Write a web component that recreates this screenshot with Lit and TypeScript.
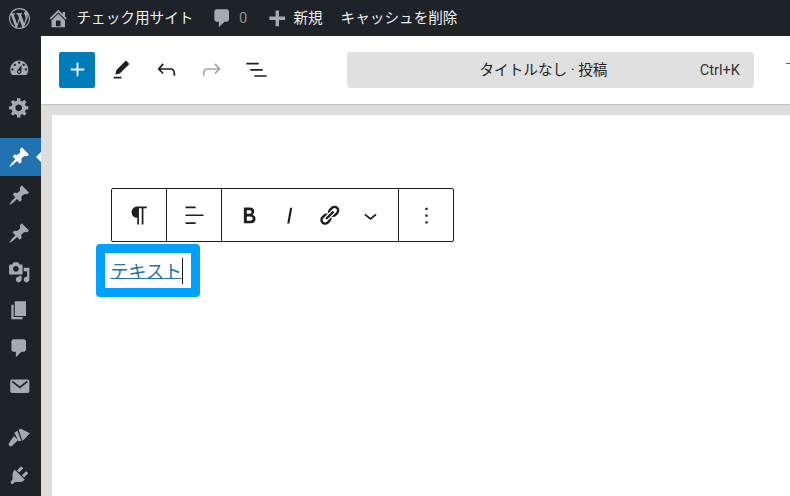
import { LitElement, html, css, svg } from "lit";
import { customElement } from "lit/decorators.js";

const D = {
  wp: "M20 10c0-5.51-4.49-10-10-10C4.48 0 0 4.49 0 10c0 5.52 4.48 10 10 10 5.51 0 10-4.48 10-10zM7.78 15.37L4.37 6.22c.55-.02 1.17-.08 1.17-.08.5-.06.44-1.13-.06-1.11 0 0-1.45.11-2.37.11-.18 0-.37 0-.58-.01C4.12 2.69 6.87 1.11 10 1.11c2.33 0 4.45.87 6.05 2.34-.68-.11-1.65.39-1.65 1.58 0 .74.45 1.36.9 2.1.35.61.55 1.36.55 2.46 0 1.49-1.4 5-1.4 5l-3.03-8.37c.54-.02.82-.17.82-.17.5-.05.44-1.25-.06-1.22 0 0-1.44.12-2.38.12-.87 0-2.33-.12-2.33-.12-.5-.03-.56 1.2-.06 1.22l.92.08 1.26 3.41zM17.41 10c.24-.64.74-1.87.43-4.25.7 1.29 1.05 2.71 1.05 4.25 0 3.29-1.73 6.24-4.4 7.78.97-2.59 1.94-5.2 2.92-7.78zM6.1 18.09C3.12 16.65 1.11 13.53 1.11 10c0-1.3.23-2.48.72-3.59C3.25 10.3 4.67 14.2 6.1 18.09zm4.03-6.63l2.58 6.98c-.86.29-1.76.45-2.71.45-.79 0-1.57-.11-2.29-.33.81-2.38 1.62-4.74 2.42-7.1z",
  home: "M16 8.5l1.53 1.53-1.06 1.06L10 4.62l-6.47 6.47-1.06-1.06L10 2.5l4 4v-2h2v4zm-6-2.46l6 5.99V18H4v-5.97zM12 17v-5H8v5h4z",
  comment: "M5 2h9c1.1 0 2 .9 2 2v7c0 1.1-.9 2-2 2h-2l-5 5v-5H5c-1.1 0-2-.9-2-2V4c0-1.1.9-2 2-2z",
  plusBar: "M17 8.5v3h-5.5V17h-3v-5.5H3v-3h5.5V3h3v5.5z",
  dashboard: "M3.76 16h12.48c1.1-1.37 1.76-3.11 1.76-5 0-4.42-3.58-8-8-8s-8 3.58-8 8c0 1.89.66 3.63 1.76 5zM10 4c.55 0 1 .45 1 1s-.45 1-1 1-1-.45-1-1 .45-1 1-1zM6 6c.55 0 1 .45 1 1s-.45 1-1 1-1-.45-1-1 .45-1 1-1zm8 0c.55 0 1 .45 1 1s-.45 1-1 1-1-.45-1-1 .45-1 1-1zm-5.37 5.55L12 7v6c0 1.1-.9 2-2 2s-2-.9-2-2c0-.57.24-1.08.63-1.45zM4 10c.55 0 1 .45 1 1s-.45 1-1 1-1-.45-1-1 .45-1 1-1zm12 0c.55 0 1 .45 1 1s-.45 1-1 1-1-.45-1-1 .45-1 1-1zm-5 3c0-.55-.45-1-1-1s-1 .45-1 1 .45 1 1 1 1-.45 1-1z",
  gear: "M18 12h-2.18c-.17.7-.44 1.35-.81 1.93l1.54 1.54-2.1 2.1-1.54-1.54c-.58.36-1.23.63-1.91.79V19H8v-2.18c-.68-.16-1.33-.43-1.91-.79l-1.54 1.54-2.12-2.12 1.54-1.54c-.36-.58-.63-1.23-.79-1.91H1V9.03h2.17c.16-.7.44-1.35.8-1.94L2.43 5.55l2.1-2.1 1.54 1.54c.58-.37 1.24-.64 1.93-.81V2h3v2.18c.68.16 1.33.43 1.91.79l1.54-1.54 2.12 2.12-1.54 1.54c.36.59.64 1.24.8 1.94H18V12zm-8.5 1.5c1.66 0 3-1.34 3-3s-1.34-3-3-3-3 1.34-3 3 1.34 3 3 3z",
  pin: "M10.44 3.02l1.82-1.82 6.36 6.35-1.83 1.82c-1.05-.68-2.48-.57-3.41.36l-.75.75c-.92.93-1.04 2.35-.35 3.41l-1.83 1.82-2.41-2.41-2.8 2.79c-.42.42-3.38 2.71-3.8 2.29s1.86-3.39 2.28-3.81l2.79-2.79L4.1 9.36l1.83-1.82c1.05.69 2.48.57 3.4-.36l.75-.75c.93-.92 1.05-2.35.36-3.41z",
  media: "M13 11V4c0-.55-.45-1-1-1h-1.67L9 1H5L3.67 3H2c-.55 0-1 .45-1 1v7c0 .55.45 1 1 1h10c.55 0 1-.45 1-1zM7 4.5c1.38 0 2.5 1.12 2.5 2.5S8.38 9.5 7 9.5 4.5 8.38 4.5 7 5.62 4.5 7 4.5zM14 6h5v10.5c0 1.38-1.12 2.5-2.5 2.5S14 17.88 14 16.5s1.12-2.5 2.5-2.5c.17 0 .34.02.5.05V9h-3V6zm-4 8.05V13h2v3.5c0 1.38-1.12 2.5-2.5 2.5S7 17.88 7 16.5 8.12 14 9.5 14c.17 0 .34.02.5.05z",
  page: "M6 15V2h10v13H6zm-1 1h8v2H3V5h2v11z",
  mail: "M19 14.5v-9c0-.83-.67-1.5-1.5-1.5H3.49c-.83 0-1.5.67-1.5 1.5v9c0 .83.67 1.5 1.5 1.5H17.5c.83 0 1.5-.67 1.5-1.5zM17.7 6.2L10.5 12 3.3 6.2l.9-1.1 6.3 5 6.3-5z",
  brush: "M9.4 3.3 11.3 2.4 19.5 6.5 13.6 12.7 12.8 13ZM5.6 6 8.4 4.2 11.8 13.1 9.4 13.6ZM5.2 8.8 9 12.4 3.5 17.8C2.7 18.4 1.6 18.1 1 17.3.5 16.6.4 15.9 1 15.2Z",
  plugin: "M13.11 4.36L9.87 7.6 8 5.73l3.24-3.24c.35-.34 1.05-.2 1.56.32.52.51.66 1.21.31 1.55zm-8 1.77l.91-1.12 9.01 9.01-1.19.84c-.71.71-2.63 1.16-3.82 1.16H6.14L4.9 17.26c-.59.59-1.54.59-2.12 0-.59-.58-.59-1.53 0-2.12l1.24-1.24v-3.88c0-1.13.4-3.19 1.09-3.89zm7.26 3.97l3.24-3.24c.34-.35 1.04-.21 1.55.31.52.51.66 1.21.31 1.55l-3.24 3.25z",
  link: "M17.74 2.76c1.68 1.69 1.68 4.41 0 6.1l-1.53 1.52c-1.12 1.12-2.7 1.47-4.14 1.09l2.62-2.61.76-.77.76-.76c.84-.84.84-2.2 0-3.04-.84-.85-2.2-.85-3.04 0l-.77.76-3.38 3.38c-.37-1.44-.02-3.02 1.1-4.14l1.52-1.53c1.69-1.68 4.42-1.68 6.1 0zM8.59 13.43l5.34-5.34c.42-.42.42-1.1 0-1.52-.44-.43-1.13-.39-1.53 0l-5.33 5.34c-.42.42-.42 1.1 0 1.52.44.43 1.13.39 1.52 0zm-.76 2.29l4.14-4.15c.38 1.44.03 3.02-1.09 4.14l-1.52 1.53c-1.69 1.68-4.41 1.68-6.1 0-1.68-1.68-1.68-4.42 0-6.1l1.53-1.52c1.12-1.12 2.7-1.47 4.14-1.1l-4.14 4.15c-.85.84-.85 2.2 0 3.05.84.84 2.2.84 3.04 0z",
};
const G = {
  plus: "M18 11.2h-5.2V6h-1.6v5.2H6v1.6h5.2V18h1.6v-5.2H18z",
  pencil: "m19 7-3-3-8.5 8.5-1 4 4-1L19 7Zm-7 11.5H5V20h7v-1.5Z",
  undo: "M18.3 11.7c-.6-.6-1.4-.9-2.3-.9H6.7l2.9-3.3-1.1-1-4.5 5L8.5 16l1-1-2.7-2.7H16c.5 0 .9.2 1.3.5 1 1 1 3.4 1 4.5v.3h1.5v-.2c0-1.5 0-4.3-1.5-5.7z",
  redo: "M15.6 6.5l-1.1 1 2.9 3.3H8c-.9 0-1.7.3-2.3.9-1.4 1.5-1.4 4.2-1.4 5.6v.2h1.5v-.3c0-1.1 0-3.5 1-4.5.3-.3.7-.5 1.3-.5h9.2L14.5 15l1.1 1.1 4.6-4.6-4.6-5z",
  list: "M3 6h11v1.5H3V6Zm3.5 5.5h11V13h-11v-1.5ZM21 17H10v1.5h11V17Z",
  para: "m9.99609 14v-.2251l.00391.0001v6.225h1.5v-14.5h2.5v14.5h1.5v-14.5h3v-1.5h-8.50391c-2.76142 0-5 2.23858-5 5 0 2.7614 2.23858 5 5 5z",
  align: "M13 5.5H4V4h9v1.5Zm7 7H4V11h16v1.5Zm-7 7H4V18h9v1.5Z",
  bold: "M14.7 11.3c1-.6 1.5-1.6 1.5-3 0-2.3-1.3-3.4-4-3.4H7v14h5.8c1.4 0 2.5-.3 3.3-1 .8-.7 1.2-1.7 1.2-2.9.1-1.9-.8-3.1-2.6-3.7zm-5.1-4h2.3c.6 0 1.1.1 1.4.4.3.3.5.7.5 1.2s-.2 1-.5 1.2c-.3.3-.8.4-1.4.4H9.6V7.3zm4.6 9c-.4.3-1 .4-1.7.4H9.6v-3.9h2.9c.7 0 1.3.2 1.7.5.4.3.6.8.6 1.5s-.2 1.2-.6 1.5z",
  italic: "M12.5 5L10 19h1.9l2.5-14z",
  chevron: "M17.5 11.6L12 16l-5.5-4.4.9-1.2L12 14l4.5-3.6 1 1.2z",
  more: "M13 19h-2v-2h2v2zm0-6h-2v-2h2v2zm0-6h-2V5h2v2z",
};

const dash = (d: string, cls = "") =>
  html`<svg class="dash ${cls}" viewBox="0 0 20 20" aria-hidden="true">${svg`<path d=${d}></path>`}</svg>`;
const gut = (d: string, cls = "") =>
  html`<svg class="gut ${cls}" viewBox="0 0 24 24" aria-hidden="true">${svg`<path d=${d}></path>`}</svg>`;

@customElement("app-root")
export class AppRoot extends LitElement {
  static styles = css`
    :host {
      display: block;
      width: 790px;
      height: 496px;
      overflow: hidden;
      font-family: "Roboto", "Noto Sans CJK JP", sans-serif;
      font-size: 14.625px;
      line-height: 36px;
    }
    * { box-sizing: border-box; }
    svg { display: block; fill: currentColor; flex: none; }
    .dash { width: 22.5px; height: 22.5px; }
    .gut { width: 27px; height: 27px; }

    .shell {
      display: grid;
      grid-template-columns: 41px 1fr;
      grid-template-rows: 36px 1fr;
      width: 790px;
      height: 496px;
    }

    .bar {
      grid-column: 1 / 3;
      display: flex;
      align-items: center;
      background: #1d2327;
      color: #f0f0f1;
    }
    .bar .dash { color: #a7aaad; }
    .bar .wp { width: 21px; height: 21px; margin-left: 9px; }
    .bar .home { margin-left: 17px; }
    .bar .site { margin-left: 7px; }
    .bar .bubble { margin-left: 18px; }
    .bar .count { margin-left: 5px; color: #8c8f94; width: 21px; }
    .bar .add { margin-left: 6px; }
    .bar .new { margin-left: 5px; }
    .bar .purge { margin-left: 18px; }

    .side {
      background: #1d2327;
      color: #a7aaad;
      padding-top: 13.5px;
      display: flex;
      flex-direction: column;
    }
    .item {
      position: relative;
      height: 38.25px;
      flex: none;
      display: flex;
      align-items: center;
      justify-content: center;
      padding-right: 2px;
    }
    .sep { height: 12px; flex: none; }
    .item.active { background: #2271b1; color: #fff; }
    .item.active::after {
      content: "";
      position: absolute;
      right: 0;
      top: 50%;
      margin-top: -5px;
      border: 5px solid transparent;
      border-right-color: #fff;
      border-left-width: 0;
    }

    .main { background: #ddd; display: flex; flex-direction: column; min-width: 0; overflow: hidden; }
    .head {
      height: 69px;
      flex: none;
      background: #fff;
      border-bottom: 1px solid #c4c4c4;
      display: flex;
      align-items: center;
      padding: 0 0 1px 18px;
      color: #1e1e1e;
      white-space: nowrap;
      overflow: hidden;
    }
    .add-block {
      width: 36px;
      height: 36px;
      flex: none;
      background: #007cba;
      color: #fff;
      border-radius: 2px;
      display: flex;
      align-items: center;
      justify-content: center;
      margin-right: 4px;
    }
    .tool { width: 45px; flex: none; display: flex; justify-content: center; }
    .tool.off { color: #a6a6a6; }
    .cmd {
      margin-left: 68px;
      width: 407px;
      height: 36px;
      flex: none;
      background: #e0e0e0;
      border-radius: 4px;
      position: relative;
      padding-right: 14px;
      text-align: center;
      line-height: 36px;
      color: #1e1e1e;
    }
    .cmd .key {
      position: absolute;
      right: 14px;
      top: 0;
      color: #333;
    }
    .save { margin-left: 31px; color: #007cba; flex: none; }

    .band { flex: 1; padding: 10px 0 0 11px; min-height: 0; display: flex; }
    .canvas {
      flex: 1;
      background: #fff;
      padding: 73px 0 0 59px;
      display: flex;
      flex-direction: column;
      align-items: flex-start;
    }
    .toolbar {
      display: flex;
      height: 54px;
      background: #fff;
      border: 1px solid #1e1e1e;
      border-radius: 2px;
      color: #1e1e1e;
    }
    .group {
      display: flex;
      align-items: center;
      justify-content: center;
      border-left: 1px solid #1e1e1e;
      width: 55px;
    }
    .group:first-child { border-left: 0; width: 54px; }
    .group.fmt { width: 177px; justify-content: flex-start; padding-left: 14px; }
    .group.fmt > * { margin-right: 13px; }
    .group.fmt .i { margin-right: 15px; }
    .group.fmt .dash { margin-right: 16px; }

    .block {
      margin: 2px 0 0 -15px;
      width: 104px;
      height: 53px;
      border: 9px solid #00a0ff;
      border-radius: 4px;
      padding-left: 5.5px;
      display: flex;
      align-items: center;
      background: #fff;
    }
    .link {
      margin-top: 2px;
      font-size: 18px;
      line-height: 26px;
      color: #2271b1;
      text-decoration: underline;
      text-decoration-thickness: 1px;
      text-underline-offset: 0;
    }
    .caret { width: 1px; height: 26px; background: #1e1e1e; margin-left: 0.5px; flex: none; }
  `;

  render() {
    return html`
      <div class="shell">
        <header class="bar">
          ${dash(D.wp, "wp")}
          ${dash(D.home, "home")}
          <span class="site">チェック用サイト</span>
          ${dash(D.comment, "bubble")}
          <span class="count">0</span>
          ${dash(D.plusBar, "add")}
          <span class="new">新規</span>
          <span class="purge">キャッシュを削除</span>
        </header>
        <nav class="side">
          <div class="item">${dash(D.dashboard)}</div>
          <div class="item">${dash(D.gear)}</div>
          <div class="sep"></div>
          <div class="item active">${dash(D.pin)}</div>
          <div class="item">${dash(D.pin)}</div>
          <div class="item">${dash(D.pin)}</div>
          <div class="item">${dash(D.media)}</div>
          <div class="item">${dash(D.page)}</div>
          <div class="item">${dash(D.comment)}</div>
          <div class="item">${dash(D.mail)}</div>
          <div class="sep"></div>
          <div class="item">${dash(D.brush)}</div>
          <div class="item">${dash(D.plugin)}</div>
        </nav>
        <main class="main">
          <div class="head">
            <div class="add-block">${gut(G.plus)}</div>
            <div class="tool">${gut(G.pencil)}</div>
            <div class="tool">${gut(G.undo)}</div>
            <div class="tool off">${gut(G.redo)}</div>
            <div class="tool">${gut(G.list)}</div>
            <div class="cmd">タイトルなし · 投稿<span class="key">Ctrl+K</span></div>
            <span class="save">下書き保存</span>
          </div>
          <div class="band">
            <div class="canvas">
              <div class="toolbar">
                <div class="group">${gut(G.para)}</div>
                <div class="group">${gut(G.align)}</div>
                <div class="group fmt">
                  ${gut(G.bold)}
                  ${gut(G.italic, "i")}
                  ${dash(D.link)}
                  ${gut(G.chevron)}
                </div>
                <div class="group">${gut(G.more)}</div>
              </div>
              <div class="block">
                <span class="link">テキスト</span><span class="caret"></span>
              </div>
            </div>
          </div>
        </main>
      </div>
    `;
  }
}
